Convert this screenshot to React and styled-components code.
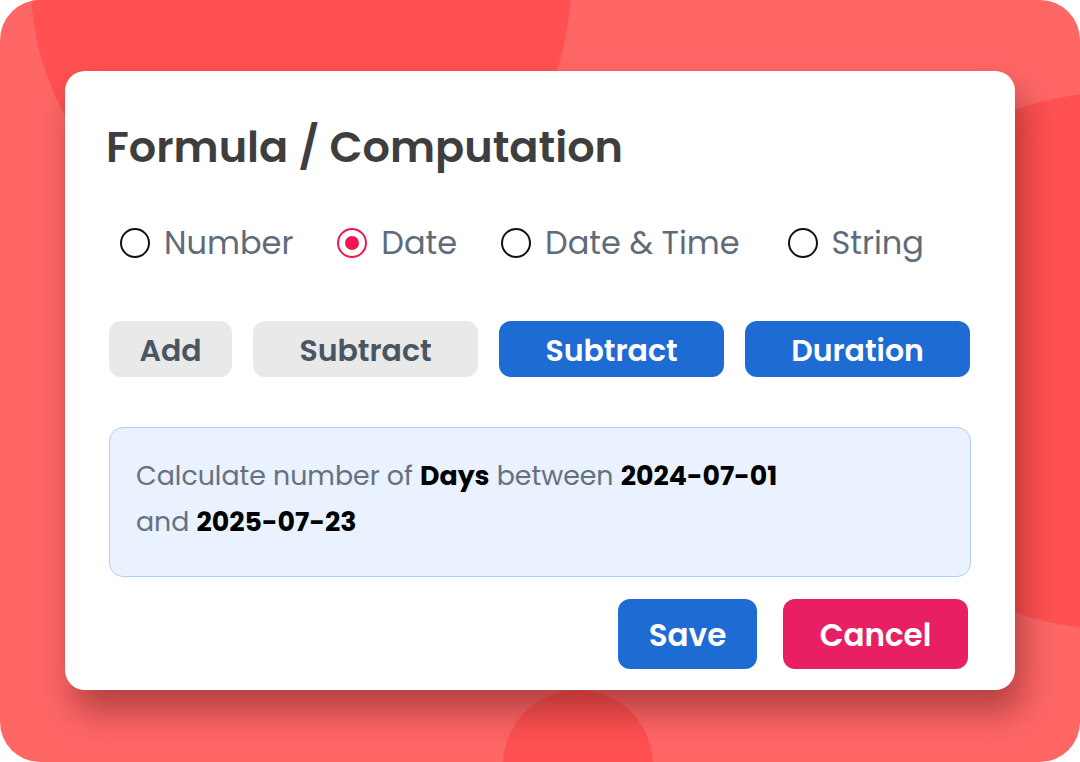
import React from "react";
import styled, { createGlobalStyle } from "styled-components";

const GlobalStyle = createGlobalStyle`
  html, body {
    margin: 0;
    padding: 0;
    background: #ffffff;
  }
  body {
    font-family: "Poppins", "Inter", "Noto Sans", sans-serif;
  }
`;

const types = ["Number", "Date", "Date & Time", "String"];

const ops = [
  { label: "Add", variant: "gray" },
  { label: "Subtract", variant: "gray" },
  { label: "Subtract", variant: "blue" },
  { label: "Duration", variant: "blue" },
];

const App = () => {
  return (
    <>
      <GlobalStyle />
      <Frame>
        <Blob $x={31} $y={-286} $size={540} />
        <Blob $x={841} $y={93} $size={536} />
        <Blob $x={503} $y={690} $size={150} />
        <Card>
          <Title>Formula / Computation</Title>
          <RadioRow>
            {types.map((t) => (
              <RadioItem key={t}>
                <Radio $checked={t === "Date"} />
                <span>{t}</span>
              </RadioItem>
            ))}
          </RadioRow>
          <OpRow>
            {ops.map(({ label, variant }, ind) => (
              <OpButton key={ind} $variant={variant} $wide={ind > 0}>
                {label}
              </OpButton>
            ))}
          </OpRow>
          <InfoBox>
            Calculate number of <b>Days</b> between <b>2024-07-01</b>
            <br />
            and <b>2025-07-23</b>
          </InfoBox>
          <Footer>
            <ActionButton $color="#1f6bd4" $width={139}>
              Save
            </ActionButton>
            <ActionButton $color="#e91f63" $width={185}>
              Cancel
            </ActionButton>
          </Footer>
        </Card>
      </Frame>
    </>
  );
};

const Frame = styled.div`
  position: relative;
  width: 1080px;
  height: 762px;
  box-sizing: border-box;
  padding: 71px 65px 72px 65px;
  background: #ff6767;
  border-radius: 40px;
  overflow: hidden;
  display: flex;
`;

const Blob = styled.div`
  position: absolute;
  left: ${(p) => p.$x}px;
  top: ${(p) => p.$y}px;
  width: ${(p) => p.$size}px;
  height: ${(p) => p.$size}px;
  border-radius: 50%;
  background: #ff5151;
`;

const Card = styled.div`
  position: relative;
  z-index: 1;
  flex: 1;
  display: flex;
  flex-direction: column;
  box-sizing: border-box;
  padding: 44px 44px 21px 44px;
  background: #ffffff;
  border-radius: 20px;
  box-shadow: 8px 22px 34px rgba(90, 20, 20, 0.45);
`;

const Title = styled.h1`
  margin: 0 0 0 -3px;
  font-size: 43px;
  line-height: 64px;
  font-weight: 600;
  color: #3e3e3e;
`;

const RadioRow = styled.div`
  display: flex;
  align-items: center;
  gap: 44px;
  margin: 46px 0 0 11px;
  height: 36px;
`;

const RadioItem = styled.label`
  display: flex;
  align-items: center;
  gap: 14px;
  font-size: 32px;
  color: #5f6b7b;
  font-weight: 400;
  &:last-child {
    margin-left: 4px;
  }
`;

const Radio = styled.span`
  box-sizing: border-box;
  width: 30px;
  height: 30px;
  border-radius: 50%;
  border: 2px solid ${(p) => (p.$checked ? "#f0164f" : "#111111")};
  display: flex;
  align-items: center;
  justify-content: center;
  &::after {
    content: "";
    width: 14px;
    height: 14px;
    border-radius: 50%;
    background: #f0164f;
    display: ${(p) => (p.$checked ? "block" : "none")};
  }
`;

const OpRow = styled.div`
  display: flex;
  gap: 21px;
  margin-top: 60px;
`;

const OpButton = styled.div`
  box-sizing: border-box;
  width: ${(p) => (p.$wide ? 225 : 123)}px;
  height: 56px;
  padding-top: 3px;
  display: flex;
  align-items: center;
  justify-content: center;
  border-radius: 12px;
  font-size: 30px;
  font-weight: 600;
  background: ${(p) => (p.$variant === "blue" ? "#1f6bd4" : "#e9e9e9")};
  color: ${(p) => (p.$variant === "blue" ? "#ffffff" : "#4a5564")};
`;

const InfoBox = styled.div`
  box-sizing: border-box;
  margin-top: 50px;
  height: 150px;
  padding: 25px 26px;
  background: #e9f2fe;
  border: 1px solid #afd0fa;
  border-radius: 14px;
  font-size: 26.8px;
  line-height: 46px;
  color: #667180;
  b {
    color: #000000;
    font-weight: 700;
  }
`;

const Footer = styled.div`
  display: flex;
  justify-content: flex-end;
  gap: 26px;
  margin-top: 22px;
  padding-right: 3px;
`;

const ActionButton = styled.div`
  box-sizing: border-box;
  width: ${(p) => p.$width}px;
  height: 70px;
  padding-top: 3px;
  display: flex;
  align-items: center;
  justify-content: center;
  border-radius: 12px;
  background: ${(p) => p.$color};
  color: #ffffff;
  font-size: 31px;
  font-weight: 600;
`;

export default App;
